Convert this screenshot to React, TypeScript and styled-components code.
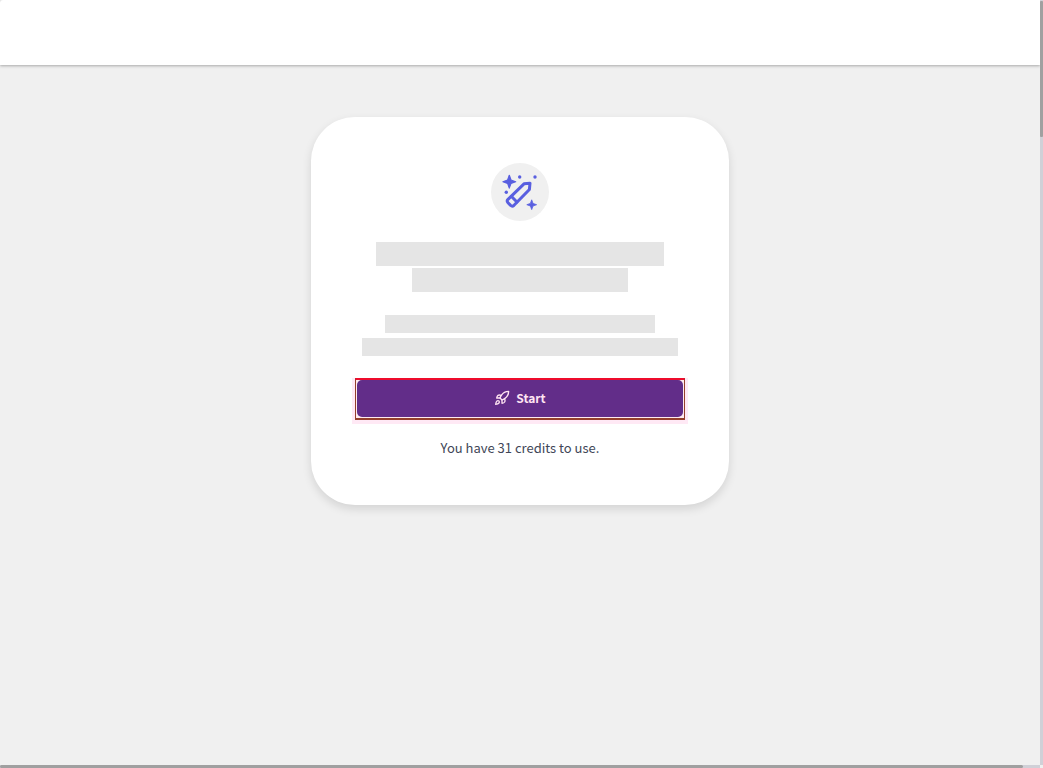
import React from "react";
import styled, { createGlobalStyle } from "styled-components";
import { Rocket } from "lucide-react";

const GlobalStyle = createGlobalStyle`
  * { box-sizing: border-box; }
  body {
    margin: 0;
    background: #f0f0f0;
    font-family: "Noto Sans CJK SC", "Noto Sans", sans-serif;
  }
`;

const Frame = styled.div`
  display: grid;
  grid-template-columns: 1fr 3px;
  grid-template-rows: 1fr 3px;
  min-height: 100vh;
`;

const Page = styled.div`
  display: flex;
  flex-direction: column;
`;

const Header = styled.header`
  height: 65px;
  background: #fff;
  border-top-left-radius: 3px;
  box-shadow: 0 1px 3px rgba(0, 0, 0, 0.3);
`;

const Main = styled.main`
  display: flex;
  justify-content: center;
  padding: 52px 16px;
`;

const Card = styled.section`
  display: flex;
  flex-direction: column;
  align-items: center;
  width: 100%;
  max-width: 418px;
  padding: 46px 44px;
  background: #fff;
  border-radius: 44px;
  box-shadow: 0 4px 10px rgba(0, 0, 0, 0.12);
`;

const IconBadge = styled.div`
  width: 58px;
  height: 58px;
  margin-bottom: 21px;
  border-radius: 50%;
  background: #f0f0f0;
`;

const Lines = styled.div<{ $gap: number }>`
  display: flex;
  flex-direction: column;
  align-items: center;
  gap: ${(p) => p.$gap}px;
  width: 100%;
`;

const Copy = styled.div`
  display: flex;
  flex-direction: column;
  gap: 23px;
  width: 100%;
  margin-bottom: 22px;
`;

const Line = styled.div<{ $width: number; $height: number }>`
  width: ${(p) => p.$width}px;
  max-width: 100%;
  height: ${(p) => p.$height}px;
  background: #e5e5e5;
`;

const Highlight = styled.div`
  width: 100%;
  padding: 0 1px 1px;
  border: 1px solid #943f2c;
  border-top: 2px solid #ee0c2c;
  border-bottom-width: 2px;
  background: #ffeaf0;
  box-shadow: 0 1px 0 3px #ffe9f5;
  clip-path: inset(0 -3px -4px -3px);
`;

const StartButton = styled.button`
  display: flex;
  align-items: center;
  justify-content: center;
  gap: 6px;
  width: 100%;
  height: 37px;
  padding: 0 0 1px;
  border: 0;
  border-radius: 5px;
  background: #622d89;
  color: #ffe4f2;
  font: 700 12px/20px "Noto Sans CJK SC", "Noto Sans", sans-serif;
  cursor: pointer;
`;

const Credits = styled.p`
  margin: 18px 0 0;
  padding-bottom: 1px;
  color: #414657;
  font-size: 13px;
  line-height: 20px;
`;

const VerticalBar = styled.div`
  background: #d0d0d7;
`;

const VerticalThumb = styled.div`
  height: 136px;
  margin-top: 1px;
  border-radius: 1px;
  background: #a0a0a0;
`;

const HorizontalBar = styled.div`
  background: #d0d0d7;
`;

const HorizontalThumb = styled.div`
  width: 98.4%;
  height: 3px;
  border-radius: 2px;
  background: #a0a0a0;
`;

function MagicPencil() {
  return (
    <svg width="58" height="58" viewBox="1 0 58 58" aria-hidden="true">
      <g fill="#595fe0">
        <path d="M19.3 12.3 L21 17 L25.7 18.7 L21 20.4 L19.3 25.1 L17.6 20.4 L12.9 18.7 L17.6 17Z" stroke="#595fe0" strokeWidth="1.2" strokeLinejoin="round" />
        <path d="M41.7 36.8 L43 40.4 L46.6 41.7 L43 43 L41.7 46.6 L40.4 43 L36.8 41.7 L40.4 40.4Z" stroke="#595fe0" strokeWidth="0.8" strokeLinejoin="round" />
        <circle cx="29.7" cy="14" r="1.7" />
        <circle cx="45" cy="14" r="1.7" />
        <circle cx="16.3" cy="29.3" r="1.7" />
      </g>
      <g fill="none" stroke="#595fe0" strokeWidth="3" strokeLinecap="round" strokeLinejoin="round">
        <path d="M40 20.2 L34 20.8 L18 36.3 Q16.4 38 18 39.7 L20.6 42.4 Q22.3 43.8 24 42.3 L39.4 26.5Z" />
        <path d="M21.3 33.3 L26.9 39" />
      </g>
    </svg>
  );
}

export default function App() {
  return (
    <>
      <GlobalStyle />
      <Frame>
        <Page>
          <Header />
          <Main>
            <Card>
              <IconBadge>
                <MagicPencil />
              </IconBadge>
              <Copy>
                <Lines $gap={2}>
                  <Line $width={288} $height={24} />
                  <Line $width={216} $height={24} />
                </Lines>
                <Lines $gap={5}>
                  <Line $width={270} $height={18} />
                  <Line $width={316} $height={18} />
                </Lines>
              </Copy>
              <Highlight>
                <StartButton type="button">
                  <Rocket size={16} strokeWidth={2} aria-hidden="true" />
                  Start
                </StartButton>
              </Highlight>
              <Credits>You have 31 credits to use.</Credits>
            </Card>
          </Main>
        </Page>
        <VerticalBar>
          <VerticalThumb />
        </VerticalBar>
        <HorizontalBar>
          <HorizontalThumb />
        </HorizontalBar>
      </Frame>
    </>
  );
}
